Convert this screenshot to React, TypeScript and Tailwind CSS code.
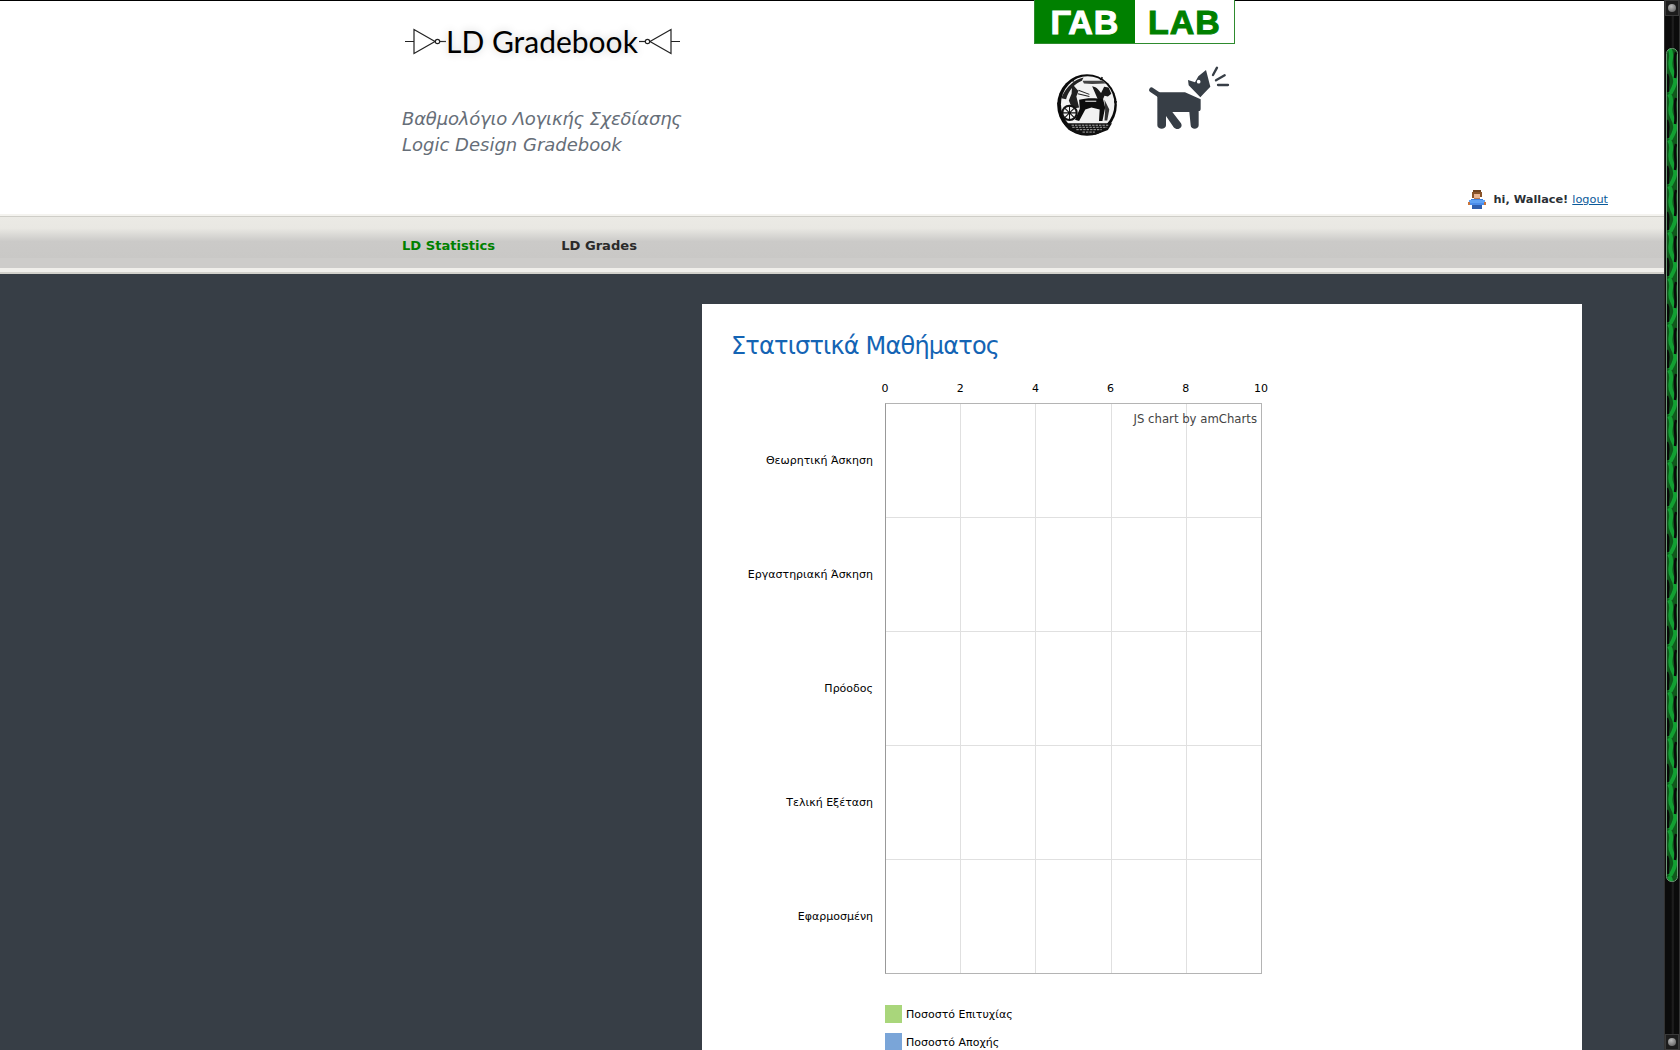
import React from 'react';

const rows = ['Θεωρητική Άσκηση', 'Εργαστηριακή Άσκηση', 'Πρόοδος', 'Τελική Εξέταση', 'Εφαρμοσμένη'];
const ticks = ['0', '2', '4', '6', '8', '10'];

const Inverter: React.FC<{ flip?: boolean }> = ({ flip }) => (
  <svg width="42" height="30" viewBox="0 0 42 30" className={flip ? '-scale-x-100' : ''} fill="none" stroke="#222" strokeWidth="1.2">
    <path d="M0 15.5H9M9 3.500V27.500L30 15.500Z" />
    <circle cx="32.5" cy="15.5" r="2.2" />
    <path d="M35 15.5H41" />
  </svg>
);

const Seal = () => (
  <svg width="72" height="72" viewBox="0 0 210 210">
    <ellipse cx="105" cy="105" rx="87" ry="90" fill="#0a0a0a" />
    <ellipse cx="107" cy="103" rx="78" ry="82" fill="#f2f2f2" />
    <path d="M30 85C45 50 70 30 95 25L90 34C70 42 52 60 44 88Z" fill="#222" />
    <path d="M92 34H150L160 42 120 44 96 42Z" fill="#444" />
    <path d="M62 44L80 64 74 80 82 112 62 116 52 92 60 72Z" fill="#222" />
    <path d="M80 62L112 74M78 72L112 80" stroke="#222" strokeWidth="3" />
    <path d="M120 50C135 52 140 62 146 70L155 52 168 54 176 72 166 80 156 78 150 92H138Z" fill="#1a1a1a" />
    <path d="M82 90C100 84 130 84 152 88L158 112 150 152 140 152 142 118 118 112 100 118 82 152 70 148 84 116Z" fill="#0d0d0d" />
    <path d="M156 90L170 118 164 150H156L158 120Z" fill="#333" />
    <path d="M100 94H132" stroke="#f2f2f2" strokeWidth="3" />
    <circle cx="54" cy="128" r="21" fill="#f2f2f2" stroke="#111" strokeWidth="6" />
    <path d="M33 128H75M54 107V149M40 114L68 142M68 114L40 142" stroke="#111" strokeWidth="3" />
    <path d="M36 158H178L166 178 130 192 88 192 52 178Z" fill="#111" />
    <path d="M60 164H170M62 170H164M74 177H148M92 184H128" stroke="#eee" strokeWidth="2" strokeDasharray="7 3" />
    <path d="M18 100H26M184 96H192M60 30L66 36M150 24L144 32" stroke="#111" strokeWidth="5" />
  </svg>
);

const BarkingDog = () => (
  <svg width="90" height="75" viewBox="0 0 270 225" fill="#373e46">
    <path d="M20 90L38 102" stroke="#373e46" strokeWidth="15" strokeLinecap="round" />
    <path d="M32 97H120L167 118V146C167 150 165 153 161 153V196C161 210 137 210 137 196L133 156H82L108 190C116 204 96 214 86 202L63 168V196C63 210 37 210 37 196V112Z" />
    <path d="M131 76L129 60 150 67 160 49 183 30 196 80 178 99 166 112Z" />
    <circle cx="161" cy="65" r="5.500" fill="#fff" />
    <path d="M204 45L216 23M213 61L239 46M219 75H249" stroke="#373e46" strokeWidth="7" strokeLinecap="round" fill="none" />
  </svg>
);

const Avatar = () => (
  <svg width="20" height="20" viewBox="0 0 20 20" shapeRendering="crispEdges">
    <rect x="6" y="0" width="8" height="2" fill="#6f4320" />
    <rect x="5" y="2" width="10" height="2" fill="#8a5429" />
    <rect x="5" y="4" width="2" height="4" fill="#8a5429" />
    <rect x="13" y="4" width="2" height="3" fill="#8a5429" />
    <rect x="7" y="4" width="6" height="4" fill="#e9b592" />
    <rect x="7" y="8" width="6" height="1" fill="#b97a52" />
    <rect x="4" y="9" width="12" height="1" fill="#3b7fe0" />
    <rect x="2" y="10" width="16" height="3" fill="#5ea2f5" />
    <rect x="1" y="12" width="2" height="3" fill="#c8743c" />
    <rect x="17" y="12" width="2" height="3" fill="#c8743c" />
    <rect x="3" y="13" width="14" height="2" fill="#4a8cea" />
    <rect x="5" y="15" width="10" height="4" fill="#2d5fb0" />
  </svg>
);

const ScrollKnob = () => (
  <div className="h-[16px] bg-[#1c1c1c] border border-[#3a3a3a] flex items-center justify-center">
    <div className="w-[8px] h-[8px] rounded-full bg-[radial-gradient(circle_at_40%_30%,#bbb,#555)]" />
  </div>
);

const ScrollThumb = () => (
  <svg width="12" height="834" viewBox="0 0 12 834" className="block">
    <defs>
      <pattern id="vein" width="12" height="46" patternUnits="userSpaceOnUse">
        <rect width="12" height="46" fill="#0f5a1c" />
        <path d="M3 0C9 8 1 14 6 23S10 36 4 46" stroke="#12a032" strokeWidth="4" fill="none" />
        <path d="M10 4C7 12 11 18 9 30M1 26C4 32 1 38 2 44" stroke="#0a0a0a" strokeWidth="2.500" fill="none" />
      </pattern>
    </defs>
    <rect x="0.500" y="0.500" width="11" height="833" rx="5" fill="url(#vein)" stroke="#6f9a78" />
  </svg>
);

export default function App() {
  return (
    <div className="flex h-[1050px] w-[1680px] overflow-hidden bg-[#373e46] font-['DejaVu_Sans',sans-serif]">
      <div className="w-[1664px] flex flex-col">
        <header className="h-[214px] bg-white border-t border-black pl-[402px] flex">
          <div className="w-[632px] pt-[20px]">
            <div className="flex items-center h-[40px] pl-[3px]">
              <Inverter />
              <span className="font-['Lato',sans-serif] text-[30px] text-black -ml-[1px] leading-none [text-shadow:0_0_8px_#ccc]">LD Gradebook</span>
              <Inverter flip />
            </div>
            <p className="mt-[45px] text-[18px] leading-[26px] italic text-[#666e78]">
              <span className="tracking-[-0.200px]">Βαθμολόγιο Λογικής Σχεδίασης</span><br />Logic Design Gradebook
            </p>
          </div>
          <div className="w-[202px]">
            <div className="flex h-[44px] w-[201px] border border-[#2e8b2e] border-t-0 -mt-px font-['Liberation_Sans',sans-serif] font-bold text-[34px] leading-none tracking-[1px] [-webkit-text-stroke:1px_currentColor]">
              <div className="w-[100px] bg-[#008000] text-white flex items-center justify-center">ΓΑΒ</div>
              <div className="flex-1 bg-white text-[#008000] flex items-center justify-center">LAB</div>
            </div>
            <div className="flex mt-[25px] pl-[17px] gap-[22px] w-[260px]">
              <Seal />
              <div className="-mt-[9px]"><BarkingDog /></div>
            </div>
          </div>
          <div className="flex-1 flex justify-end items-end pr-[56px] pb-[4px]">
            <div className="flex items-center h-[20px] text-[11.3px] text-[#2b2f35]">
              <Avatar />
              <b className="ml-[7px] font-bold">hi, Wallace!</b>
              <a className="ml-[4px] text-[#0a5a9a] underline" href="#">logout</a>
            </div>
          </div>
        </header>

        <nav className="h-[60px] flex flex-col">
          <div className="h-[3px] bg-[#f4f3ef] border-b border-[#cfcec8]" />
          <div className="flex-1 bg-[linear-gradient(#ebeae5_0%,#e9e8e3_22%,#cbcac8_48%,#c9c8c6_80%,#cdccca_81%,#cdccca_100%)] pl-[402px] pt-[7px] flex items-center gap-[66px] text-[13.100px] font-bold">
            <span className="text-[#008000]">LD Statistics</span>
            <span className="text-[#2a2a2a]">LD Grades</span>
          </div>
          <div className="h-[6px] bg-[#f0efeb] border-b-2 border-[#d2d1cb]" />
        </nav>

        <main className="flex-1 pl-[702px] pt-[30px] overflow-hidden">
          <section className="w-[880px] h-full bg-white pl-[30px] pt-[27px]">
            <h1 className="-ml-px text-[24px] leading-[30px] tracking-[-0.800px] text-[#1464b4] font-normal">Στατιστικά Μαθήματος</h1>
            <div className="mt-[22px] flex text-[11px] leading-none text-black">
              <div className="w-[153px] pt-[20px] pr-[12px] flex flex-col items-end">
                {rows.map(r => (
                  <div key={r} className="h-[114px] flex items-center whitespace-nowrap">{r}</div>
                ))}
              </div>
              <div>
                <div className="w-[376px] h-[20px] flex justify-between">
                  {ticks.map(t => (
                    <span key={t} className="w-0 flex justify-center">{t}</span>
                  ))}
                </div>
                <div className="relative w-[377px] h-[571px] border border-[#b4b4b4] border-l-[#999] flex flex-col">
                  {rows.map((r, i) => (
                    <div key={r} className={`flex-1 grid grid-cols-[75px_75px_76px_75px_1fr] ${i < 4 ? 'border-b border-[#e0e0e0]' : ''}`}>
                      <div className="border-r border-[#e0e0e0]" />
                      <div className="border-r border-[#e0e0e0]" />
                      <div className="border-r border-[#e0e0e0]" />
                      <div className="border-r border-[#e0e0e0]" />
                      <div />
                    </div>
                  ))}
                  <span className="absolute top-[10px] right-[4px] text-[11.700px] text-[#444]">JS chart by amCharts</span>
                </div>
                <div className="mt-[31px] flex flex-col gap-[10px]">
                  <div className="flex items-center gap-[4px] h-[18px]">
                    <div className="w-[17px] h-[18px] bg-[#a9d67b]" />
                    <span>Ποσοστό Επιτυχίας</span>
                  </div>
                  <div className="flex items-center gap-[4px] h-[18px]">
                    <div className="w-[17px] h-[18px] bg-[#7aa5d8]" />
                    <span>Ποσοστό Αποχής</span>
                  </div>
                </div>
              </div>
            </div>
          </section>
        </main>
      </div>

      <aside className="w-[16px] bg-[#0b0b0b] flex flex-col border-x border-[#333] overflow-hidden">
        <ScrollKnob />
        <div className="flex-1 flex flex-col items-center pt-[32px] bg-[linear-gradient(90deg,#0b0b0b_0%,#0b0b0b_45%,#1d1d1d_50%,#1d1d1d_60%,#0b0b0b_65%)]">
          <ScrollThumb />
        </div>
        <ScrollKnob />
      </aside>
    </div>
  );
}
